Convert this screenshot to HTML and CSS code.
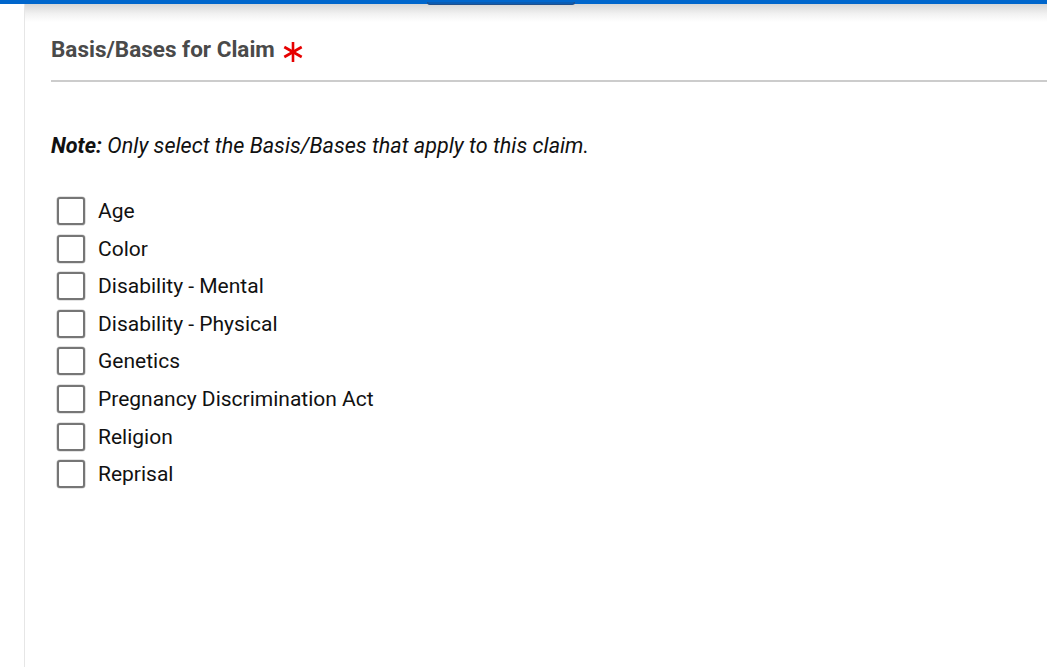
FILE: index.html
```html
<!DOCTYPE html>
<html lang="en">
<head>
<meta charset="utf-8">
<title>Basis/Bases for Claim</title>
<link rel="stylesheet" href="styles.css">
</head>
<body>
<div class="topbar"><span class="tab-edge"></span></div>
<div class="page">
  <main class="content">
    <h2 class="section-title">Basis/Bases for Claim
      <svg class="req" viewBox="0 0 20 20" aria-label="required"><g stroke="#e60000" stroke-width="2.6" stroke-linecap="butt"><line x1="10" y1="0" x2="10" y2="20"/><line x1="1.3" y1="5" x2="18.7" y2="15"/><line x1="1.3" y1="15" x2="18.7" y2="5"/></g></svg>
    </h2>
    <p class="note"><b>Note:</b> Only select the Basis/Bases that apply to this claim.</p>
    <ul class="options">
      <li><label><span class="box"></span>Age</label></li>
      <li><label><span class="box"></span>Color</label></li>
      <li><label><span class="box"></span>Disability - Mental</label></li>
      <li><label><span class="box"></span>Disability - Physical</label></li>
      <li><label><span class="box"></span>Genetics</label></li>
      <li><label><span class="box"></span>Pregnancy Discrimination Act</label></li>
      <li><label><span class="box"></span>Religion</label></li>
      <li><label><span class="box"></span>Reprisal</label></li>
    </ul>
  </main>
</div>
</body>
</html>
```
FILE: styles.css
```css
html, body {
  margin: 0;
  padding: 0;
  background: #fff;
  font-family: Roboto, "Liberation Sans", Arial, sans-serif;
  overflow: hidden;
}
.topbar {
  height: 4px;
  background: #0066cc;
  position: relative;
}
.tab-edge {
  position: absolute;
  left: 427px;
  top: 2px;
  width: 146px;
  height: 2px;
  border: 1px solid #1f4f8c;
  border-top: none;
  border-radius: 0 0 3px 3px;
  background: #0a5cb3;
}
.page {
  height: 663px;
  margin-left: 24px;
  border-left: 1px solid #e6e6e6;
  background: linear-gradient(to bottom, #d6d6d6 0px, #f2f2f2 10px, #ffffff 18px, #ffffff 100%);
  background-size: 100% 20px;
  background-repeat: no-repeat;
  background-color: #fff;
}
.content {
  padding: 30px 0 0 26px;
}
.section-title {
  margin: 0;
  padding-bottom: 16px;
  border-bottom: 2px solid #cccccc;
  font-size: 22.5px;
  font-weight: 700;
  line-height: 30px;
  color: #4a4a4a;
  display: flex;
  align-items: center;
}
.req {
  width: 20px;
  height: 20px;
  margin-left: 8px;
  margin-top: 5px;
}
.note {
  margin: 50px 0 0 0;
  font-size: 21.6px;
  line-height: 28px;
  font-style: italic;
  color: #111;
}
.note b {
  font-weight: 700;
}
.options {
  list-style: none;
  margin: 37px 0 0 0;
  padding: 0 0 0 6px;
  display: flex;
  flex-direction: column;
}
.options li {
  height: 37.6px;
}
.options label {
  display: flex;
  align-items: center;
  gap: 13px;
  font-size: 21px;
  line-height: 28px;
  color: #111;
}
.box {
  width: 24px;
  height: 24px;
  border: 2px solid #767676;
  border-radius: 3px;
  box-shadow: 0 0 0 0.6px #c8c8c8;
  background: #fff;
  flex: none;
}
```
